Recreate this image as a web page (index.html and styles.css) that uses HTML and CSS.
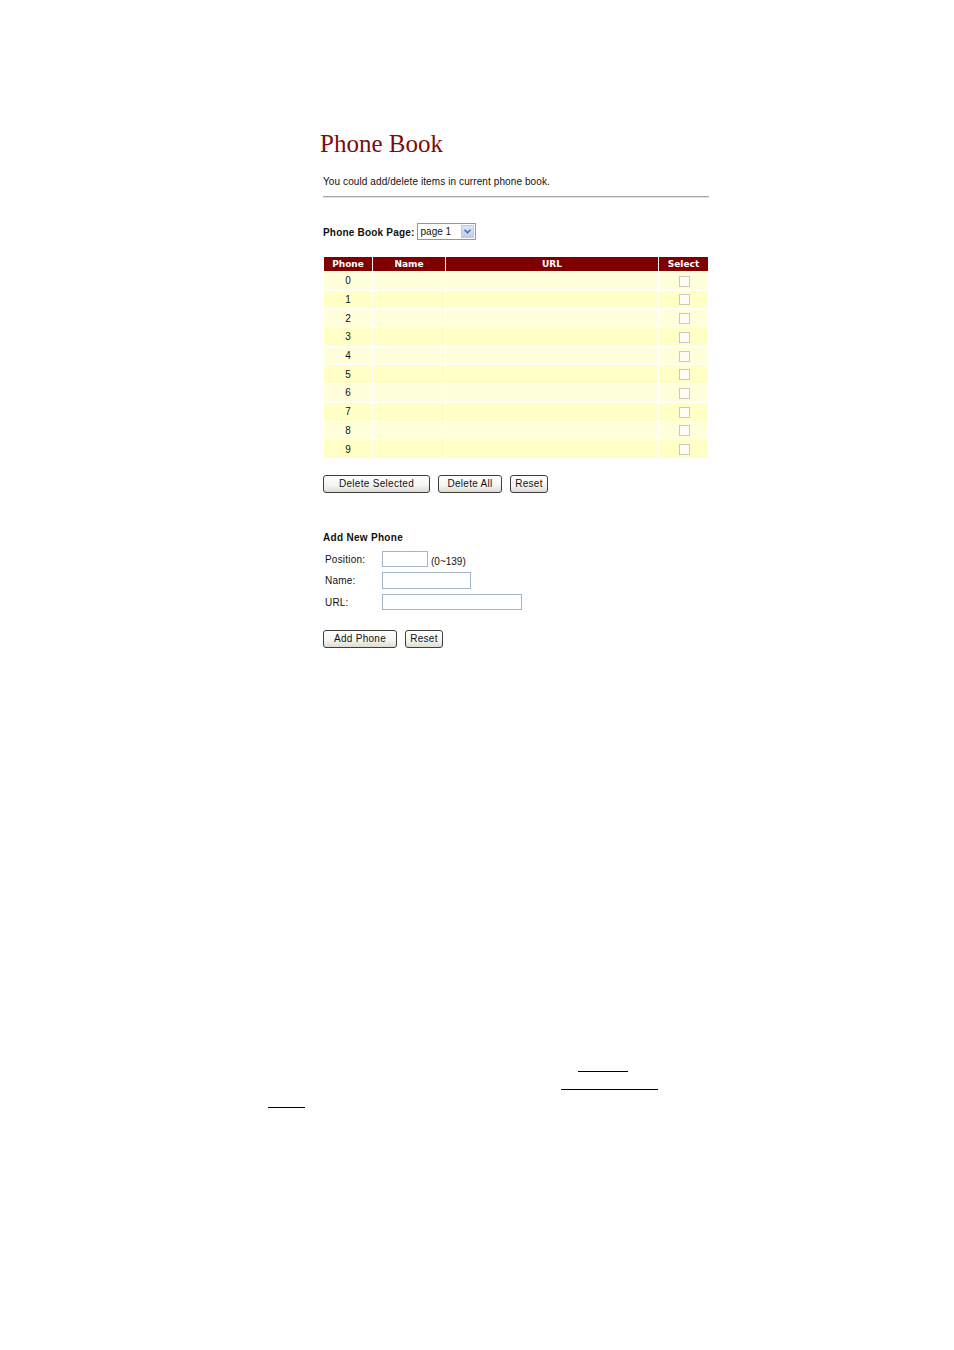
FILE: index.html
```html
<!DOCTYPE html>
<html>
<head>
<meta charset="utf-8">
<title>Phone Book</title>
<link rel="stylesheet" href="styles.css">
</head>
<body>
<div class="page">
  <h1 class="title">Phone Book</h1>
  <p class="desc">You could add/delete items in current phone book.</p>
  <div class="rule"></div>

  <div class="pagesel">
    <span class="lbl-bold">Phone Book Page:</span>
    <div class="select">
      <span class="select-text">page 1</span>
      <span class="select-btn"><svg width="7" height="5" viewBox="0 0 7 5"><path d="M0.5 0.8 L3.5 3.8 L6.5 0.8" fill="none" stroke="#4d6185" stroke-width="1.4"/></svg></span>
    </div>
  </div>

  <table class="book">
    <thead>
      <tr><th class="c-phone">Phone</th><th class="c-name">Name</th><th class="c-url">URL</th><th class="c-sel">Select</th></tr>
    </thead>
    <tbody>
      <tr class="r0"><td class="num">0</td><td></td><td></td><td class="chk"><span class="box"></span></td></tr>
      <tr class="r1"><td class="num">1</td><td></td><td></td><td class="chk"><span class="box"></span></td></tr>
      <tr class="r0"><td class="num">2</td><td></td><td></td><td class="chk"><span class="box"></span></td></tr>
      <tr class="r1"><td class="num">3</td><td></td><td></td><td class="chk"><span class="box"></span></td></tr>
      <tr class="r0"><td class="num">4</td><td></td><td></td><td class="chk"><span class="box"></span></td></tr>
      <tr class="r1"><td class="num">5</td><td></td><td></td><td class="chk"><span class="box"></span></td></tr>
      <tr class="r0"><td class="num">6</td><td></td><td></td><td class="chk"><span class="box"></span></td></tr>
      <tr class="r1"><td class="num">7</td><td></td><td></td><td class="chk"><span class="box"></span></td></tr>
      <tr class="r0"><td class="num">8</td><td></td><td></td><td class="chk"><span class="box"></span></td></tr>
      <tr class="r1"><td class="num">9</td><td></td><td></td><td class="chk"><span class="box"></span></td></tr>
    </tbody>
  </table>

  <div class="btnrow btnrow-del">
    <button class="btn w-delsel">Delete Selected</button>
    <button class="btn w-delall">Delete All</button>
    <button class="btn w-reset">Reset</button>
  </div>

  <div class="addhead">Add New Phone</div>
  <div class="form">
    <span class="flabel">Position:</span>
    <span class="fctrl"><span class="input in-pos"></span><span class="hint">(0~139)</span></span>
    <span class="flabel">Name:</span>
    <span class="fctrl"><span class="input in-name"></span></span>
    <span class="flabel">URL:</span>
    <span class="fctrl"><span class="input in-url"></span></span>
  </div>

  <div class="btnrow btnrow-add">
    <button class="btn w-add">Add Phone</button>
    <button class="btn w-reset2">Reset</button>
  </div>
</div>

<div class="rules">
  <div class="line l1"></div>
  <div class="line l2"></div>
  <div class="line l3"></div>
</div>
</body>
</html>
```

FILE: styles.css
```css
html, body {
  margin: 0;
  padding: 0;
  background: #ffffff;
}

body {
  font-family: "Liberation Sans", Arial, sans-serif;
  font-size: 10px;
  color: #111111;
}

.page {
  padding: 129px 0 0 323px;
  width: 390px;
}

.title {
  margin: 0 0 0 -3px;
  font-family: "Liberation Serif", "Times New Roman", serif;
  font-weight: normal;
  font-size: 25px;
  line-height: 30px;
  color: #7d0c0c;
}

.desc {
  margin: 17px 0 0 0;
  line-height: 12px;
  letter-spacing: 0.1px;
}

.rule {
  margin-top: 8px;
  width: 386px;
  height: 1px;
  background: #a9a9a1;
  border-bottom: 1px solid #e2e2dc;
}

.pagesel {
  margin-top: 25px;
  display: flex;
  align-items: center;
  gap: 2px;
  height: 17px;
}

.lbl-bold {
  font-weight: bold;
  letter-spacing: 0.2px;
  padding-top: 2px;
}

.select {
  box-sizing: border-box;
  width: 59px;
  height: 17px;
  border: 1px solid #7f9db9;
  display: flex;
  align-items: stretch;
  background: #fff;
}

.select-text {
  flex: 1;
  padding-left: 3px;
  line-height: 15px;
  font-size: 10px;
}

.select-btn {
  width: 13px;
  margin: 1px;
  background: linear-gradient(#dce6fb, #b9cbf3);
  border: 1px solid #b8c9ee;
  box-sizing: border-box;
  display: flex;
  align-items: center;
  justify-content: center;
}

.book {
  margin-top: 16px;
  width: 386px;
  border-collapse: separate;
  border-spacing: 1px;
  margin-left: 0;
}

.book th {
  background: #800000;
  color: #ffffff;
  font-family: "DejaVu Sans", Verdana, sans-serif;
  font-weight: bold;
  font-size: 9px;
  height: 14px;
  padding: 0;
  line-height: 13px;
}

.c-phone { width: 48px; }
.c-name { width: 72px; }
.c-url { width: 212px; }
.c-sel { width: 49px; }

.book td {
  height: 17.7px;
  padding: 0;
}

.r0 td { background: #ffffdc; }
.r1 td { background: #ffffc6; }

.num {
  text-align: center;
  font-size: 10px;
  line-height: 12px;
  padding-top: 1px;
}

.book td.num {
  padding-top: 1px;
  height: 16.7px;
}

.chk {
  text-align: center;
}

.box {
  display: inline-block;
  width: 9px;
  height: 9px;
  border: 1px solid #c9c9c0;
  background: #fdfdf5;
  vertical-align: middle;
  margin-left: 1px;
}

.btnrow {
  display: flex;
}

.btnrow-del {
  margin-top: 16px;
  gap: 8px;
}

.btn {
  box-sizing: border-box;
  height: 18px;
  padding: 0;
  margin: 0;
  font-family: "Liberation Sans", Arial, sans-serif;
  font-size: 10px;
  letter-spacing: 0.3px;
  color: #111;
  border: 1px solid #3e3e3e;
  border-radius: 3px;
  background: linear-gradient(#ffffff 0%, #f4f4f0 60%, #dcdcd4 100%);
  line-height: 16px;
}

.w-delsel { width: 107px; }
.w-delall { width: 64px; }
.w-reset { width: 38px; }
.w-add { width: 74px; }
.w-reset2 { width: 38px; }

.addhead {
  margin-top: 39px;
  font-weight: bold;
  line-height: 12px;
  letter-spacing: 0.3px;
}

.form {
  margin-top: 7px;
  display: grid;
  grid-template-columns: 59px auto;
  row-gap: 5px;
  align-items: center;
}

.flabel {
  padding-left: 2px;
  letter-spacing: 0.2px;
}

.fctrl {
  display: flex;
  align-items: flex-end;
  gap: 3px;
}

.input {
  display: block;
  box-sizing: border-box;
  height: 16.5px;
  border: 1px solid #a5b5c8;
  background: #fff;
}

.in-pos { width: 46px; }
.in-name { width: 89px; }
.in-url { width: 140px; }

.hint {
  line-height: 12px;
  margin-bottom: -1px;
}

.btnrow-add {
  margin-top: 20px;
  gap: 8px;
}

.rules {
  margin-top: 423px;
  display: flex;
  flex-direction: column;
  gap: 17px;
}

.line {
  height: 1px;
  background: #000;
}

.l1 { margin-left: 578px; width: 50px; }
.l2 { margin-left: 561px; width: 97px; }
.l3 { margin-left: 268px; width: 37px; }
```
